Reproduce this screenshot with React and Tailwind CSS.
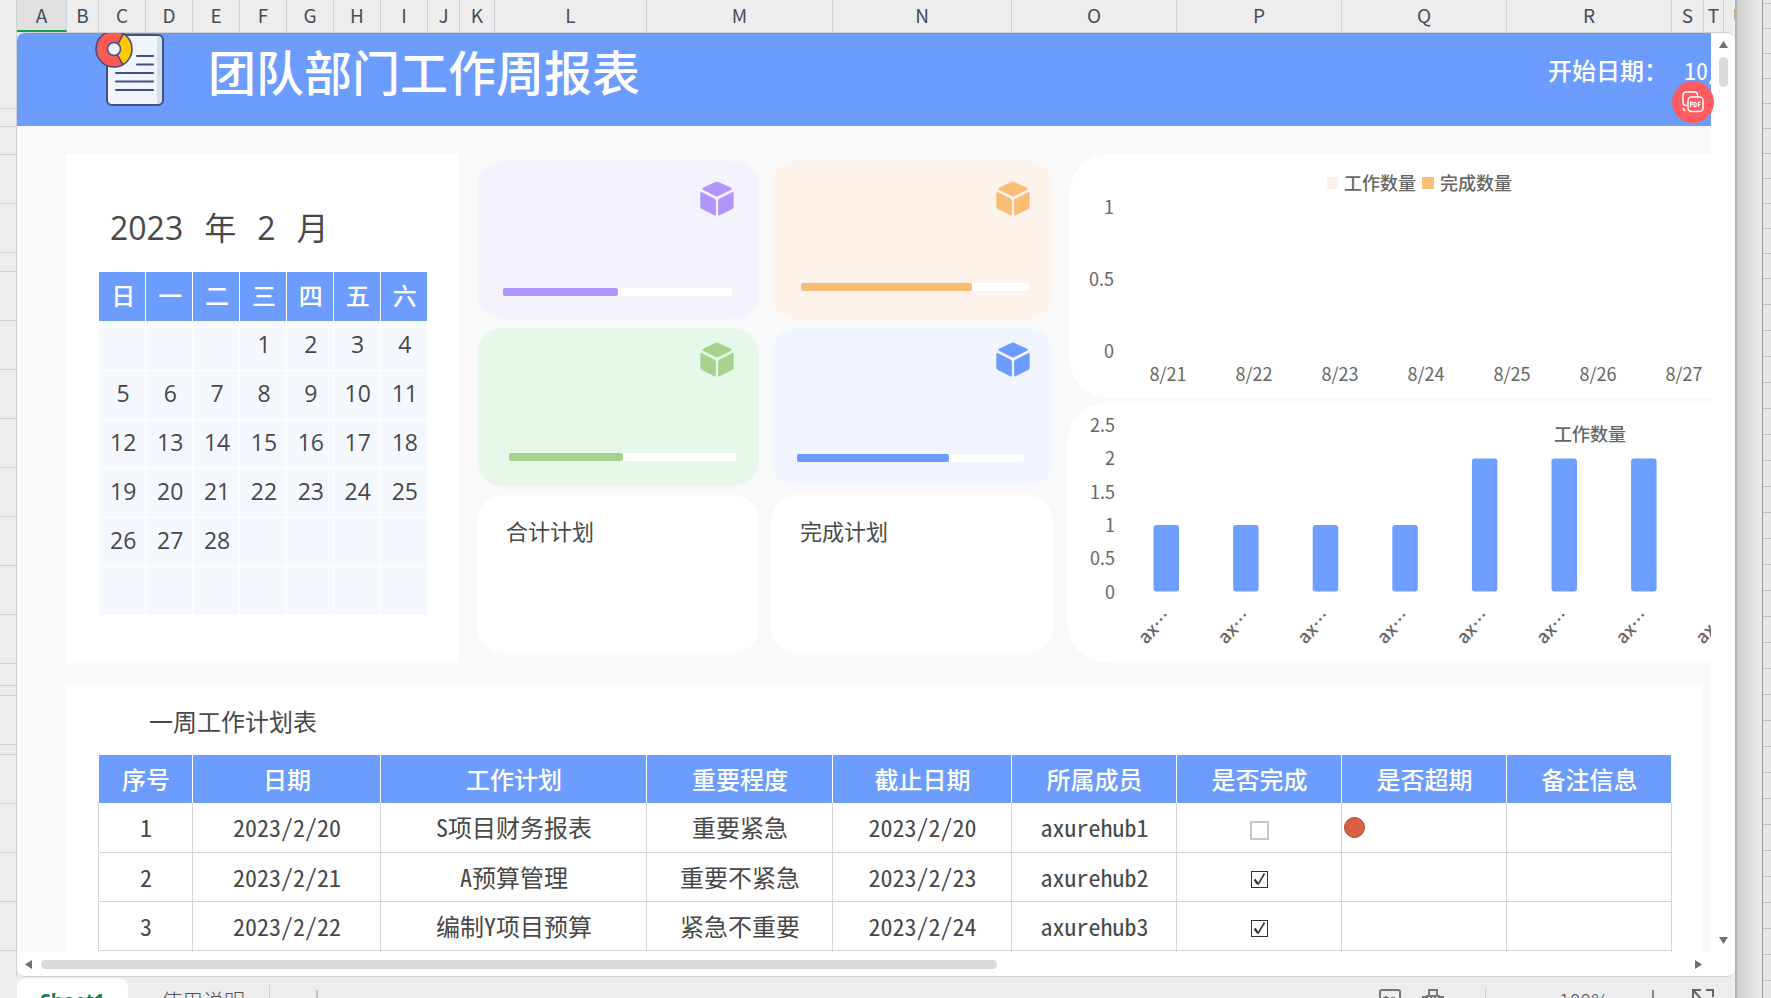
import React from "react";

const COLUMNS = [
  ["A", "w-[50px]"], ["B", "w-[32px]"], ["C", "w-[47px]"], ["D", "w-[47px]"], ["E", "w-[47px]"],
  ["F", "w-[47px]"], ["G", "w-[47px]"], ["H", "w-[47px]"], ["I", "w-[47px]"], ["J", "w-[32px]"],
  ["K", "w-[35px]"], ["L", "w-[152px]"], ["M", "w-[186px]"], ["N", "w-[179px]"], ["O", "w-[165px]"],
  ["P", "w-[165px]"], ["Q", "w-[165px]"], ["R", "w-[165px]"], ["S", "w-[32px]"], ["T", "w-[20px]"],
  ["U", "w-[32px]"],
];

const ROW_HEIGHTS = [
  "h-[109px]", "h-[18px]", "h-[28px]", "h-[49px]", "h-[49px]", "h-[19px]", "h-[49px]", "h-[49px]",
  "h-[49px]", "h-[49px]", "h-[49px]", "h-[49px]", "h-[49px]", "h-[49px]", "h-[22px]", "h-[10px]",
  "h-[49px]", "h-[10px]", "h-[49px]", "h-[49px]", "h-[49px]", "h-[49px]",
];

const WEEKDAYS = ["日", "一", "二", "三", "四", "五", "六"];
const LEADING_BLANKS = 3;
const DAYS_IN_MONTH = 28;

const WEEKS = Array.from({ length: 6 }, (_, w) =>
  Array.from({ length: 7 }, (_, d) => {
    const day = w * 7 + d - LEADING_BLANKS + 1;
    return day > 0 && day <= DAYS_IN_MONTH ? day : "";
  })
);

const TASKS = [
  { id: 1, date: "2023/2/20", plan: "S项目财务报表", level: "重要紧急", due: "2023/2/20", member: "axurehub1", done: false, late: true },
  { id: 2, date: "2023/2/21", plan: "A预算管理", level: "重要不紧急", due: "2023/2/23", member: "axurehub2", done: true },
  { id: 3, date: "2023/2/22", plan: "编制Y项目预算", level: "紧急不重要", due: "2023/2/24", member: "axurehub3", done: true },
];

const TASK_HEADS = [
  ["序号", "w-[94px]"], ["日期", "w-[188px]"], ["工作计划", "w-[266px]"], ["重要程度", "w-[186px]"],
  ["截止日期", "w-[179px]"], ["所属成员", "w-[165px]"], ["是否完成", "w-[165px]"], ["是否超期", "w-[165px]"],
  ["备注信息", "w-[165px]"],
];

function ReportIcon() {
  return (
    <svg className="block h-[84px] w-[80px]" viewBox="0 0 80 84" aria-hidden="true">
      <rect x="18" y="8" width="56" height="70" rx="5" fill="#f0f5ff" />
      <path d="M68 8h1a5 5 0 0 1 5 5v60a5 5 0 0 1-5 5h-1z" fill="#d3e0ee" />
      <rect x="18" y="8" width="56" height="70" rx="5" fill="none" stroke="#454f80" strokeWidth="2" />
      <g stroke="#454f80" strokeWidth="2" strokeLinecap="round">
        <path d="M48 29h16M48 37.500h16M27 46h37M27 54.500h37M27 63h37" />
      </g>
      <circle cx="25" cy="22" r="18" fill="#ff5a52" />
      <path d="M34.500 6.700A18 18 0 0 1 34 37.600L28.500 28.100A7 7 0 0 0 29 16.300z" fill="#ffc800" />
      <circle cx="25" cy="22" r="6.500" fill="#f0f5ff" />
      <g fill="none" stroke="#454f80" strokeWidth="1.600">
        <circle cx="25" cy="22" r="18" />
        <circle cx="25" cy="22" r="6.500" />
        <path d="M34.500 6.700L29 16.800M34 37.600L28.300 27.800" />
      </g>
    </svg>
  );
}

function Cube() {
  return (
    <svg className="h-[35px] w-[34px]" viewBox="0 0 34 35" fill="currentColor" aria-hidden="true">
      <path d="M15.400 1q1.600-.9 3.200 0L31 6.800q1.600.9 0 1.900L18.600 15q-1.600.8-3.200 0L3 8.700q-1.600-1 0-1.900z" />
      <path d="M.300 12.300q0-2 1.700-1.100l12.300 6.400q1.600.9 1.600 2.500v13.100q0 1.900-1.700 1L1.800 28Q.300 27.200.300 25.500z" />
      <path d="M33.700 12.300q0-2-1.700-1.100l-12.300 6.400q-1.600.9-1.600 2.500v13.100q0 1.900 1.700 1L32.200 28q1.500-.8 1.500-2.500z" />
    </svg>
  );
}

function StatCard({ name, percent, bg, ink, bar, pad, barBox }) {
  return (
    <div className={"flex h-[158px] w-[282px] flex-col justify-between rounded-[26px] " + bg + " " + pad}>
      <div className={"flex justify-end " + ink}>
        <Cube />
      </div>
      <div className={"h-2 rounded-[2px] bg-white " + barBox} role="progressbar" aria-label={name} aria-valuenow={percent}>
        <div className={"h-2 rounded-[2px] " + bar} style={{ width: percent + "%" }} />
      </div>
    </div>
  );
}

function LabelCard({ children }) {
  return (
    <div className="h-[158px] w-[282px] rounded-[26px] bg-white px-[29px] pt-[19px] text-[22px] leading-8 text-[#4a4a4a]">
      {children}
    </div>
  );
}

function DailyChart() {
  const days = ["8/21", "8/22", "8/23", "8/24", "8/25", "8/26", "8/27"];
  return (
    <svg className="block h-[244px] w-[720px]" viewBox="0 0 720 244" fontSize="18" fill="#666">
      <rect x="258" y="23" width="11" height="12" fill="#fdf2ea" />
      <text x="275" y="36" fontWeight="500">工作数量</text>
      <rect x="353" y="23" width="12" height="12" fill="#fabd75" />
      <text x="371" y="36" fontWeight="500">完成数量</text>
      {[["1", 60], ["0.5", 132], ["0", 204]].map(([t, y]) => (
        <text key={t} x="45" y={y} textAnchor="end">{t}</text>
      ))}
      {days.map((d, i) => (
        <text key={d} x={99 + i * 86} y="227" textAnchor="middle">{d}</text>
      ))}
    </svg>
  );
}

function MemberChart() {
  const values = [1, 1, 1, 1, 2, 2, 2, 2];
  return (
    <svg className="block h-[260px] w-[720px]" viewBox="0 0 720 260" fontSize="18" fill="#666">
      {["2.5", "2", "1.5", "1", "0.5", "0"].map((t, i) => (
        <text key={t} x="48" y={29 + i * 33.300} textAnchor="end">{t}</text>
      ))}
      <text x="487" y="38" fontWeight="500">工作数量</text>
      {values.slice(0, 7).map((v, i) => (
        <rect key={i} x={86.500 + i * 79.600} y={188.500 - v * 66.500} width="25.500" height={v * 66.500} rx="3" fill="#6e9eff" />
      ))}
      {values.map((v, i) => (
        <text key={i} fontWeight="500" transform={"translate(" + (79 + i * 79.600) + " 242) rotate(-46)"}>ax…</text>
      ))}
    </svg>
  );
}

function CheckBox({ checked, label }) {
  return (
    <span className="relative inline-flex align-middle">
      <input
        type="checkbox"
        defaultChecked={checked}
        aria-label={label}
        className={"appearance-none border bg-white " + (checked ? "size-[17px] border-[#333]" : "size-[19px] border-2 border-[#c8c8c8]")}
      />
      {checked && (
        <svg className="pointer-events-none absolute inset-0 size-[17px]" viewBox="0 0 17 17" fill="none" stroke="#333" aria-hidden="true">
          <path d="M3.500 8.500l3.500 4.500" strokeWidth="2.200" />
          <path d="M7 13.500l6.500-11" strokeWidth="1.500" />
        </svg>
      )}
    </span>
  );
}

function Arrow({ d, label }) {
  return (
    <button type="button" aria-label={label} className="flex size-[9px] items-center justify-center">
      <svg className="size-[9px]" viewBox="0 0 9 9" fill="#707070"><path d={d} /></svg>
    </button>
  );
}

export default function App() {
  return (
    <div className='flex h-screen w-full overflow-hidden bg-[#ededed] font-["Noto_Sans_CJK_SC",sans-serif]' lang="zh-CN">
      {/* Row headers */}
      <div className="flex w-[17px] shrink-0 flex-col">
        <div className="flex h-[977px] flex-col overflow-hidden border-r border-[#cdd1d8]">
          {ROW_HEIGHTS.map((h, i) => (
            <div key={i} className={"shrink-0 border-b border-[#cdd2dc] " + h} />
          ))}
        </div>
      </div>

      <main className="flex min-w-0 flex-1 flex-col">
        {/* Column headers */}
        <div className="flex h-8 shrink-0 overflow-hidden">
          {COLUMNS.map(([c, w]) => (
            <div
              key={c}
              className={"flex shrink-0 items-start justify-center border-r border-[#cdd1dc] text-[19px] leading-[29px] text-[#434d5c] " + w + (c === "A" ? " border-b-2 border-b-[#10a050] bg-[#e0e0e0]" : "")}
            >
              {c}
            </div>
          ))}
        </div>

        <div className="flex min-h-0 flex-1 flex-col overflow-hidden rounded-lg border-y border-[#d0d0d0] bg-white">
          <div className="flex min-h-0 flex-1">
            {/* Sheet viewport */}
            <div className="relative min-w-0 flex-1 overflow-hidden bg-[#f9f9f9]">
              <header className="flex h-[93px] items-start bg-[#6c9cfe] pl-[72px] text-white">
                <div className="-mt-[6px] shrink-0"><ReportIcon /></div>
                <h1 className="ml-[39px] shrink-0 pt-[5px] text-[48px] font-medium leading-[64px]">团队部门工作周报表</h1>
                <div className="ml-auto flex w-[163px] shrink-0 gap-[16px] whitespace-nowrap pt-[21px] text-[24px] font-medium leading-8">
                  <span className="shrink-0">开始日期：</span>
                  <span className='shrink-0 font-["Noto_Sans_Mono_CJK_SC","Noto_Sans_CJK_SC",sans-serif]'>10/16</span>
                </div>
              </header>

              <div className="flex items-start pl-[49px] pt-7">
                {/* Calendar */}
                <section className="h-[509px] w-[393px] shrink-0 bg-white px-[33px] pt-[49px] text-[#484848]">
                  <div className='flex h-[50px] items-center gap-[21px] pl-[11px] font-["Open_Sans","Noto_Sans_CJK_SC",sans-serif] text-[32px] leading-[50px]'>
                    <span>2023</span><span>年</span><span>2</span><span>月</span>
                  </div>
                  <table className='mt-[19px] w-[328px] table-fixed border-collapse font-["Open_Sans","Noto_Sans_CJK_SC",sans-serif] text-[23px] leading-8'>
                    <thead>
                      <tr>
                        {WEEKDAYS.map((d) => (
                          <th key={d} className="h-[49px] border-b border-r border-white bg-[#6c9cfe] p-0 pl-[2px] text-[24px] font-medium text-white last:border-r-0">{d}</th>
                        ))}
                      </tr>
                    </thead>
                    <tbody>
                      {WEEKS.map((week, i) => (
                        <tr key={i}>
                          {week.map((d, j) => (
                            <td key={j} className="h-[49px] border-b border-r border-white bg-[#f5f8ff] p-0 pb-[4px] pl-[2px] text-center last:border-r-0">{d}</td>
                          ))}
                        </tr>
                      ))}
                    </tbody>
                  </table>
                </section>

                {/* Summary cards */}
                <section className="ml-[18px] mt-[7px] grid shrink-0 grid-cols-[282px_282px] gap-x-3 gap-y-[9px]">
                  <StatCard name="紫色进度" percent={50} bg="bg-[#f4f2fd]" ink="text-[#b096fc]" bar="bg-[#b096fc]" pad="pl-[26px] pr-[25px] pt-[20px] pb-[23px]" barBox="w-[229px]" />
                  <StatCard name="橙色进度" percent={75} bg="bg-[#fdf3ea]" ink="text-[#fabd75]" bar="bg-[#fabd75]" pad="pl-[30px] pr-[23px] pt-[20px] pb-[28px]" barBox="w-[228px]" />
                  <StatCard name="绿色进度" percent={50} bg="bg-[#e6f8ea]" ink="text-[#a8d18d]" bar="bg-[#a8d18d]" pad="pl-[32px] pr-[25px] pt-[14px] pb-[25px]" barBox="w-[227px]" />
                  <StatCard name="蓝色进度" percent={67} bg="bg-[#f0f5ff]" ink="text-[#6c9cfe]" bar="bg-[#6c9cfe]" pad="pl-[26px] pr-[23px] pt-[14px] pb-[24px]" barBox="w-[227px]" />
                  <LabelCard>合计计划</LabelCard>
                  <LabelCard>完成计划</LabelCard>
                </section>

                {/* Charts */}
                <section className="ml-[14px] flex w-[720px] shrink-0 flex-col gap-[5px]">
                  <div className="ml-[2px] rounded-[40px] bg-white"><DailyChart /></div>
                  <div className="rounded-[40px] bg-white"><MemberChart /></div>
                </section>
              </div>

              {/* Weekly plan */}
              <section className="ml-[49px] mr-2 mt-[22px] bg-white pl-[32px] pt-[12px] text-[#484848]">
                <h2 className="pl-[51px] text-[24px] leading-[48px]">一周工作计划表</h2>
                <table className='mt-[10px] w-[1574px] table-fixed border-collapse text-[24px] leading-8'>
                  <thead>
                    <tr>
                      {TASK_HEADS.map(([t, w]) => (
                        <th key={t} className={"h-[48px] border-x border-white bg-[#6c9cfe] p-0 pl-px font-medium text-white " + w}>{t}</th>
                      ))}
                    </tr>
                  </thead>
                  <tbody className='text-center font-["Noto_Sans_Mono_CJK_SC","Noto_Sans_CJK_SC",sans-serif]'>
                    {TASKS.map((t) => (
                      <tr key={t.id} className="[&>td]:h-[49px] [&>td]:border [&>td]:border-[#d6d6d6] [&>td]:border-t-0 [&>td]:p-0 [&>td]:pl-px">
                        <td>{t.id}</td>
                        <td>{t.date}</td>
                        <td>{t.plan}</td>
                        <td>{t.level}</td>
                        <td>{t.due}</td>
                        <td>{t.member}</td>
                        <td><CheckBox checked={t.done} label={"是否完成 " + t.id} /></td>
                        <td>
                          {t.late && <span className="ml-px block size-[21px] rounded-full border border-[#b04428] bg-[#d96044]" />}
                        </td>
                        <td />
                      </tr>
                    ))}
                    <tr className="[&>td]:h-[49px] [&>td]:border [&>td]:border-[#d6d6d6]">
                      {TASK_HEADS.map(([t]) => <td key={t} />)}
                    </tr>
                  </tbody>
                </table>
              </section>
            </div>

            {/* Vertical scroll bar */}
            <div className="relative flex w-6 shrink-0 flex-col items-center pb-[7px] pt-[7px]">
              <Arrow label="向上滚动" d="M4.500 1L9 8H0z" />
              <div className="mt-[8px] h-[30px] w-[9px] rounded-full bg-[#dadada]" />
              <div className="mt-auto"><Arrow label="向下滚动" d="M4.500 8L0 1h9z" /></div>
              <button type="button" aria-label="PDF" className="absolute right-[21px] top-[48px] flex size-[42px] items-center justify-center rounded-full bg-[#ff5c61]">
                <svg className="size-[22px]" viewBox="0 0 22 22" fill="none" stroke="#fff" strokeWidth="1.500" aria-hidden="true">
                  <rect x="6" y="6" width="15" height="14.500" rx="3.500" />
                  <path d="M15.500 6V4a3 3 0 0 0-3-3H4a3 3 0 0 0-3 3v7.500a3 3 0 0 0 3 3h2M1 16.500a3 3 0 0 0 2.500 3" />
                  <path d="M8.500 16v-5h1.700v2.700H8.500M12 11.200v4.600h1.200q.9 0 .9-1v-2.600q0-1-.9-1zM16.300 16v-4.800h2.400M16.300 13.500h2" strokeWidth="1.100" />
                </svg>
              </button>
            </div>
          </div>

          {/* Horizontal scroll bar */}
          <div className="flex h-6 shrink-0 items-center pl-[8px] pr-[32px]">
            <Arrow label="向左滚动" d="M0 4.500L7 0v9z" />
            <div className="ml-[7px] h-[9px] w-[57%] rounded-full bg-[#dadada]" />
            <div className="ml-auto"><Arrow label="向右滚动" d="M8 4.500L1 0v9z" /></div>
          </div>
        </div>

        {/* Sheet tabs and status bar */}
        <footer className="h-[21px] shrink-0 overflow-hidden">
          <div className="mt-[2px] flex h-[44px] items-center text-[#555]">
            <button type="button" className='h-[44px] w-[111px] rounded-lg bg-white font-["Open_Sans",sans-serif] text-[19px] font-bold text-[#0b7f55]'>Sheet1</button>
            <button type="button" className="ml-[33px] text-[21px] font-light">使用说明</button>
            <span className="ml-[24px] h-[32px] w-px bg-[#cfcfcf]" />
            <button type="button" aria-label="新建工作表" className="ml-[35px]">
              <svg className="size-[24px]" viewBox="0 0 24 24" stroke="#b5b5b5" strokeWidth="1.500"><path d="M12 1v22M1 12h22" /></svg>
            </button>
            <div className="ml-auto flex items-center pr-[20px]">
              <button type="button" aria-label="图片">
                <svg className="size-[24px]" viewBox="0 0 24 24" fill="none" stroke="#777" strokeWidth="2"><rect x="2" y="1" width="20" height="22" rx="2" /><path d="M8 7v4M5 9h6M13 9h4" /></svg>
              </button>
              <button type="button" aria-label="工具" className="ml-[19px]">
                <svg className="size-[24px]" viewBox="0 0 24 24" fill="none" stroke="#777" strokeWidth="2"><path d="M8 6V1h8v5M6 20V7h12v13zM2 12V8h3M22 12V8h-3M10 12V7M14 12V7" /></svg>
              </button>
              <button type="button" aria-label="更多" className="ml-[11px]">
                <svg className="size-[14px]" viewBox="0 0 14 14" fill="none" stroke="#777" strokeWidth="1.500"><path d="M1 5l6 6 6-6" /></svg>
              </button>
              <span className="ml-[15px] h-[28px] w-px bg-[#cfcfcf]" />
              <span className="ml-[73px] text-[20px] font-light">100%</span>
              <button type="button" aria-label="放大" className="ml-[32px]">
                <svg className="size-[24px]" viewBox="0 0 24 24" stroke="#666" strokeWidth="1.500"><path d="M12 1v22M1 12h22" /></svg>
              </button>
              <button type="button" aria-label="全屏" className="ml-[26px]">
                <svg className="size-[24px]" viewBox="0 0 24 24" fill="none" stroke="#666" strokeWidth="2"><path d="M10 1H2v8M3 2l8 9M15 1h7v7M22 15v7h-7M9 22H2v-7" /></svg>
              </button>
            </div>
          </div>
        </footer>
      </main>

      {/* Window edge and the sheet behind it */}
      <div className="flex w-[36px] shrink-0">
        <div className="w-[27px] border-l-2 border-[#b5b5b5] bg-linear-to-r from-[#cfcfcf] to-[#ececec]" />
        <div className="w-[9px] border-l border-[#9c9c9c] bg-[#e6e6e6]">
          {Array.from({ length: 39 }, (_, i) => (
            <div key={i} className={"border-b border-[#c2c2c2] " + (i === 0 ? "h-1" : i < 12 ? "h-[25px]" : "h-[26px]")} />
          ))}
        </div>
      </div>
    </div>
  );
}
